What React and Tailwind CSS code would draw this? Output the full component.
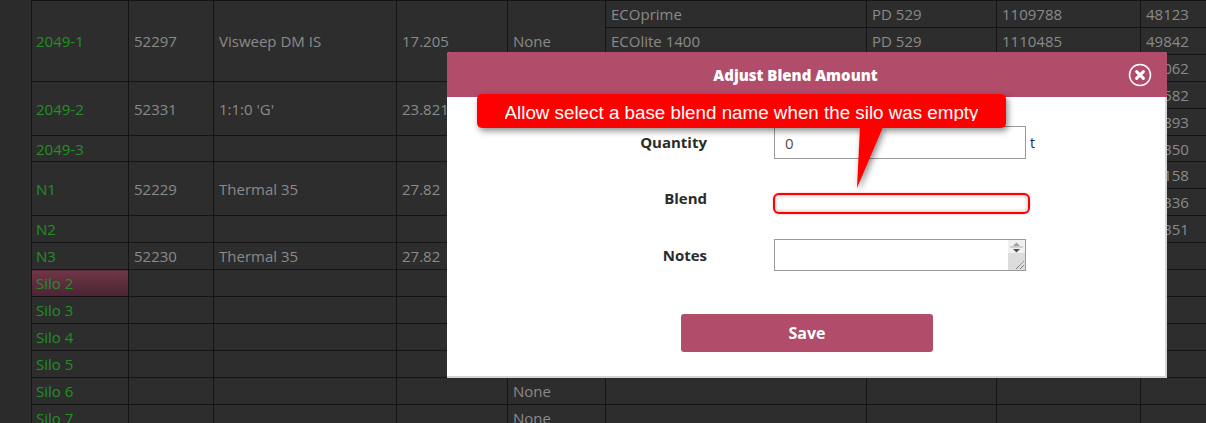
const cellFont = "[font-family:'Open_Sans','Noto_Sans',sans-serif]";

const rows = [
  { silo: "2049-1", span: 3, id: "52297", name: "Visweep DM IS", qty: "17.205", base: "None", blend: "ECOprime", pd: "PD 529", batch: "1109788", ref: "48123" },
  { blend: "ECOlite 1400", pd: "PD 529", batch: "1110485", ref: "49842" },
  { blend: "ECOlite 1400", pd: "PD 529", batch: "1110486", ref: "49062" },
  { silo: "2049-2", span: 2, id: "52331", name: "1:1:0 'G'", qty: "23.821", base: "None", blend: "ECOprime", pd: "PD 529", batch: "1110490", ref: "49582" },
  { blend: "ECOprime", pd: "PD 529", batch: "1110491", ref: "49893" },
  { silo: "2049-3", span: 1, short: true, ref: "49350" },
  { silo: "N1", span: 2, id: "52229", name: "Thermal 35", qty: "27.82", base: "None", blend: "ECOprime", pd: "PD 529", batch: "1110492", ref: "49158" },
  { blend: "ECOprime", pd: "PD 529", batch: "1110493", ref: "49336" },
  { silo: "N2", span: 1, ref: "49351" },
  { silo: "N3", span: 1, id: "52230", name: "Thermal 35", qty: "27.82" },
  { silo: "Silo 2", span: 1, active: true },
  { silo: "Silo 3", span: 1 },
  { silo: "Silo 4", span: 1 },
  { silo: "Silo 5", span: 1 },
  { silo: "Silo 6", span: 1, base: "None" },
  { silo: "Silo 7", span: 1, base: "None" },
];

const td = "border border-[#141414] pl-[5px] pr-[4px] py-0 whitespace-nowrap overflow-hidden";

function DataTable() {
  return (
    <table className={`ml-[31px] w-[1175px] table-fixed border-collapse bg-[#2d2d2d] text-[15px] leading-[20px] text-[#8a8a8a] ${cellFont}`}>
      <colgroup>
        <col className="w-[97px]" />
        <col className="w-[85px]" />
        <col className="w-[183px]" />
        <col className="w-[111px]" />
        <col className="w-[98px]" />
        <col className="w-[261px]" />
        <col className="w-[130px]" />
        <col className="w-[144px]" />
        <col className="w-[66px]" />
      </colgroup>
      <tbody>
        {rows.map((row, i) => (
          <tr key={i} className={row.short ? "h-[26px]" : "h-[27px]"}>
            {row.silo ? (
              <>
                <td
                  rowSpan={row.span}
                  className={`border border-[#141414] pl-[4px] py-0 text-[#239023] ${row.active ? "bg-gradient-to-b from-[#703647] to-[#4c2433]" : ""}`}
                >
                  {row.silo}
                </td>
                <td rowSpan={row.span} className={td}>{row.id}</td>
                <td rowSpan={row.span} className={td}>{row.name}</td>
                <td rowSpan={row.span} className={td}>{row.qty}</td>
                <td rowSpan={row.span} className={td}>{row.base}</td>
              </>
            ) : null}
            <td className={td}>{row.blend}</td>
            <td className={td}>{row.pd}</td>
            <td className={td}>{row.batch}</td>
            <td className={`${td} border-r-0`}>{row.ref}</td>
          </tr>
        ))}
      </tbody>
    </table>
  );
}

function CloseIcon() {
  return (
    <svg width="24" height="24" viewBox="0 0 24 24" fill="none" stroke="#fff">
      <circle cx="12" cy="12" r="10.5" strokeWidth="1.5" />
      <path d="M8.6 8.6l6.8 6.8M15.4 8.6l-6.8 6.8" strokeWidth="3" strokeLinecap="round" />
    </svg>
  );
}

function NotesControls() {
  return (
    <svg className="absolute right-0 top-0" width="17" height="30" viewBox="0 0 17 30">
      <rect width="17" height="13" fill="#f0f0f0" />
      <rect y="13" width="17" height="17" fill="#dcdcdc" />
      <path d="M8.5 2.5l3.5 3.5h-7z" fill="#a0a0a0" />
      <path d="M2 7h13" stroke="#b0b0b0" />
      <path d="M5 9h7l-3.5 3.5z" fill="#505050" />
      <path d="M8 29l8-8M12 29l4-4" stroke="#555" strokeDasharray="1 0.6" />
    </svg>
  );
}

function Callout() {
  return (
    <div className="absolute left-[477px] top-[94px] [filter:drop-shadow(2px_3px_3px_rgba(0,0,0,0.45))]">
      <div className="flex h-[34px] w-[529px] justify-center rounded-[5px] bg-[#ff0000] pt-[8px] text-[18.8px] leading-[22px] text-white [font-family:'Liberation_Sans',sans-serif]">
        <div className="h-[19px] overflow-hidden whitespace-nowrap">Allow select a base blend name when the silo was empty</div>
      </div>
      <svg className="absolute left-[380px] top-[33px]" width="28" height="62" viewBox="0 0 28 62">
        <path d="M3 0H26L0 61z" fill="#ff0000" />
      </svg>
    </div>
  );
}

function AdjustModal() {
  return (
    <div className={`absolute left-[447px] top-[52px] h-[326px] w-[720px] rounded-t-[3px] border-r-2 border-b-2 border-[#d4d4d4] bg-white ${cellFont}`}>
      <div className="-mr-[2px] flex h-[45px] items-center rounded-t-[3px] bg-[#b14c6a] pl-[16px] pr-[15px]">
        <div className="flex-1 pt-[2px] text-center text-[15px] font-extrabold text-white">Adjust Blend Amount</div>
        <CloseIcon />
      </div>
      <div className="flex flex-col pt-[29px] text-[15px] text-[#2b2b2b]">
        <div className="flex h-[33px] items-center">
          <label className="w-[260px] text-right font-bold">Quantity</label>
          <input
            readOnly
            value="0"
            className="ml-[67px] h-[33px] w-[252px] border border-[#999] px-[10px] text-[15px] text-[#5a4a42] outline-none"
          />
          <span className="ml-[4px] text-[14px] text-[#1a237e]">t</span>
        </div>
        <div className="mt-[34px] flex h-[21px] items-center">
          <label className="mb-[11px] w-[260px] text-right font-bold">Blend</label>
          <div className="ml-[66px] h-[21px] w-[257px] rounded-[6px] border-2 border-[#ff0000] bg-white shadow-[inset_0_0_4px_rgba(0,0,0,0.3),0_0_2px_rgba(255,0,0,0.4)]" />
        </div>
        <div className="mt-[25px] flex h-[32px] items-center">
          <label className="w-[260px] text-right font-bold">Notes</label>
          <div className="relative ml-[67px] h-[32px] w-[252px] border border-[#999] bg-white">
            <NotesControls />
          </div>
        </div>
        <button className="ml-[234px] mt-[43px] h-[38px] w-[252px] rounded-[3px] bg-[#b14c6a] text-[16px] font-bold text-white">
          Save
        </button>
      </div>
    </div>
  );
}

export default function App() {
  return (
    <div className="relative h-[423px] w-[1206px] overflow-hidden bg-[#2b2b2b]">
      <DataTable />
      <AdjustModal />
      <Callout />
    </div>
  );
}
